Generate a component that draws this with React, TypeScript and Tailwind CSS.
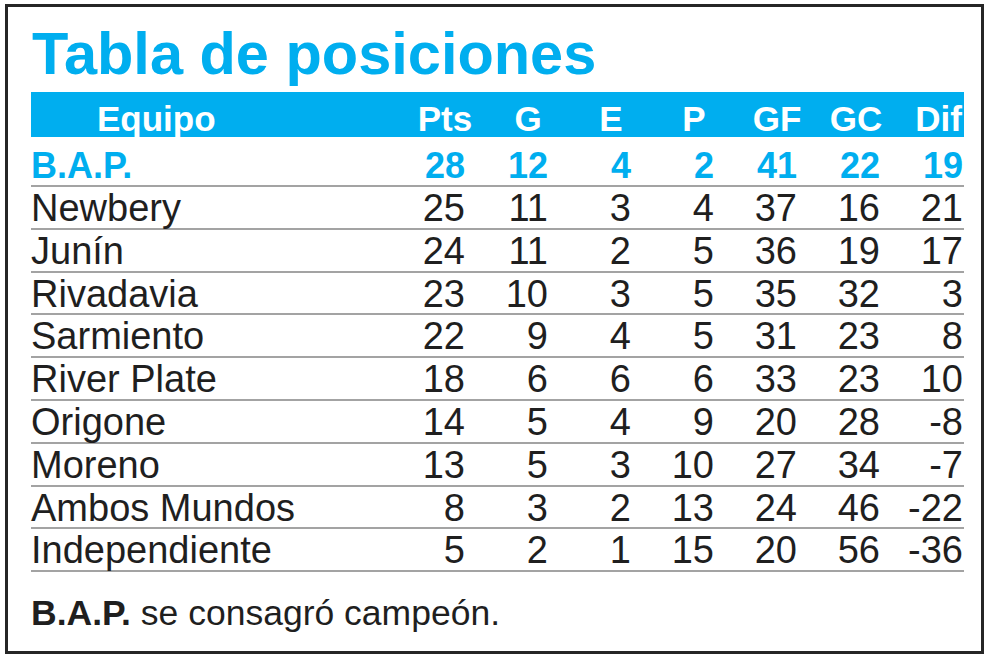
import React from "react";

const rows: [string, number[]][] = [
  ["Newbery", [25, 11, 3, 4, 37, 16, 21]],
  ["Junín", [24, 11, 2, 5, 36, 19, 17]],
  ["Rivadavia", [23, 10, 3, 5, 35, 32, 3]],
  ["Sarmiento", [22, 9, 4, 5, 31, 23, 8]],
  ["River Plate", [18, 6, 6, 6, 33, 23, 10]],
  ["Origone", [14, 5, 4, 9, 20, 28, -8]],
  ["Moreno", [13, 5, 3, 10, 27, 34, -7]],
  ["Ambos Mundos", [8, 3, 2, 13, 24, 46, -22]],
  ["Independiente", [5, 2, 1, 15, 20, 56, -36]],
];

const headers: { label: string; cls: string }[] = [
  { label: "Pts", cls: "w-[40px] flex justify-center" },
  { label: "G", cls: "w-[40px] flex justify-center" },
  { label: "E", cls: "w-[40px] flex justify-center" },
  { label: "P", cls: "w-[40px] flex justify-center" },
  { label: "GF", cls: "w-[40px] flex justify-center" },
  { label: "GC", cls: "w-[40px] flex justify-center mr-[4px]" },
  { label: "Dif", cls: "w-[40px] flex justify-end pr-[1px]" },
];

export default function App() {
  return (
    <div
      className="w-[990px] h-[660px] bg-white pt-[4px] pl-[5px]"
      style={{ fontFamily: '"Liberation Sans", Arial, Helvetica, sans-serif' }}
    >
      <div className="w-[979px] h-[650px] border-[3px] border-[#262626] pt-[17px] pl-[23px] pr-[17px]">
        <h1 className="text-[59.5px] leading-[59px] font-bold text-[#00aeef] pl-[1px] whitespace-nowrap">
          Tabla de posiciones
        </h1>
        <div className="mt-[9px] h-[45px] bg-[#00aeef] pt-[9px] flex text-white font-bold text-[35px] leading-[36px]">
          <div className="w-[351px] pl-[66px]">Equipo</div>
          {headers.map((h) => (
            <div key={h.label} className="w-[83px] flex justify-end">
              <span className={h.cls + " whitespace-nowrap"}>{h.label}</span>
            </div>
          ))}
        </div>
        <div className="h-[50px] border-b-2 border-[#a3a3a3] pt-[9px] flex text-[#00aeef] font-bold text-[36px] leading-[39px]">
          <div className="w-[351px]">B.A.P.</div>
          {[28, 12, 4, 2, 41, 22, 19].map((n, i) => (
            <div key={i} className="w-[83px] text-right">
              {n}
            </div>
          ))}
        </div>
        {rows.map(([name, nums]) => (
          <div
            key={name}
            className="h-[42.8px] border-b-2 border-[#a3a3a3] pt-[2px] flex text-[#1f1f1f] text-[38px] leading-[39px]"
          >
            <div className="w-[351px] whitespace-nowrap">{name}</div>
            {nums.map((n, i) => (
              <div key={i} className="w-[83px] text-right">
                {n}
              </div>
            ))}
          </div>
        ))}
        <p className="mt-[24px] text-[35.5px] leading-[35px] text-[#1f1f1f] whitespace-nowrap">
          <span className="font-bold">B.A.P.</span> se consagró campeón.
        </p>
      </div>
    </div>
  );
}
